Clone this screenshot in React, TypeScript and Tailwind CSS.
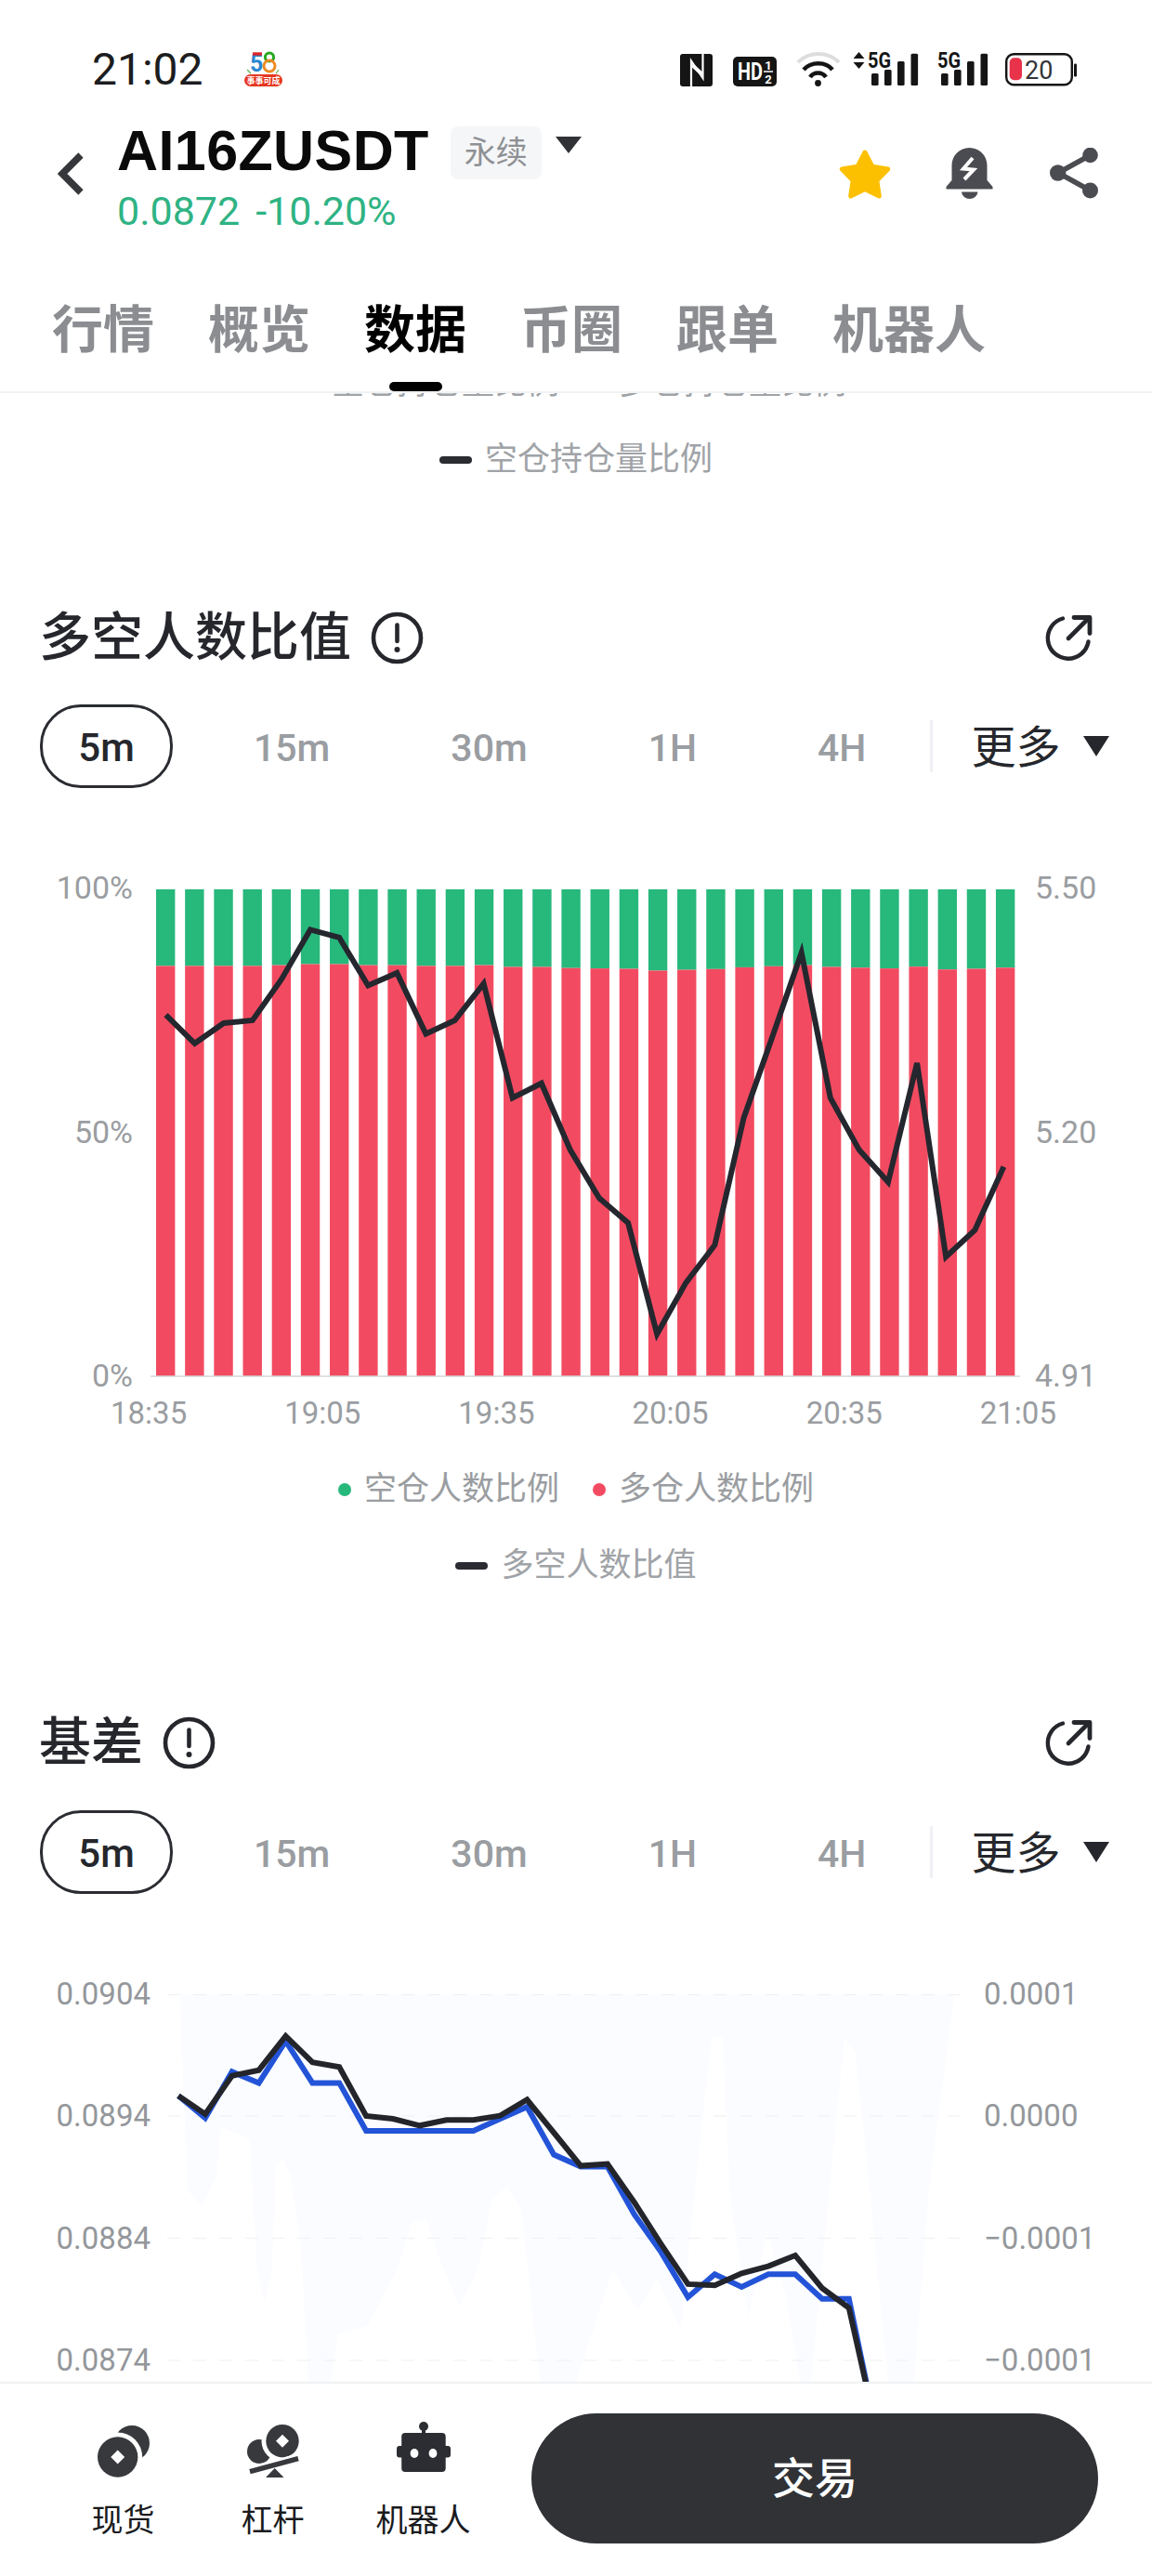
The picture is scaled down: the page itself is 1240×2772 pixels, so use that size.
import React from 'react'

const tabs = ['行情', '概览', '数据', '币圈', '跟单', '机器人']
const ranges = ['15m', '30m', '1H', '4H']

// y of the green/red split per bar, in px from the plot top
const splits = [82.4, 82.4, 82.4, 82.4, 81.6, 80.5, 80.5, 81.6, 81.6, 82.4, 82.4, 81.6, 83.5, 83.5, 84.7, 85.1, 85.5, 87.4, 86.6, 85.8, 83.9, 82.8, 81.6, 83.5, 84.3, 85.1, 83.2, 86.2, 85.5, 84.3]
const ratioLine = [135.2, 165.8, 144, 141, 97, 43.4, 51.8, 103.5, 90, 155.5, 141, 101.5, 224.4, 208.7, 280.6, 332.3, 359, 478.5, 423.4, 382.8, 246.2, 158, 68.2, 224.4, 280.6, 315, 186.9, 395.5, 366.7, 298.6]
const futuresLine = [109.2, 128.9, 87.7, 81.7, 44.9, 73.2, 78.3, 131, 134, 141.3, 135.3, 135.3, 130.6, 113.5, 149, 184.6, 182.5, 224, 269, 311.9, 313.2, 300.3, 292.6, 281, 316.2, 337.6, 466]
const spotLine = [109.2, 133.2, 83.4, 95.4, 50.4, 95.4, 95.4, 146.9, 146.9, 146.9, 146.9, 146.9, 134, 121.2, 172.6, 185.5, 185.5, 236.9, 277.6, 326, 301.2, 314.9, 301.2, 301.2, 327.8, 327.8, 466]
const basisArea = '13.8,0 21.7,211 37.5,228 53.3,194 57.2,142.6 88.9,155.5 96.8,297 104.7,331 112.6,297 116.6,185.5 124.5,177 132.4,194 144.2,271 152,417 175.9,417 183.8,365.5 215.4,357 247,297 262.9,245.5 278.7,241 294.5,288 314.3,335.5 334,297 349.9,219.8 365.7,207 381.5,232.6 401.3,417 440,417 479.5,297 507,340 527,305.5 552.7,361 574.4,147 586.3,46 598,46 606,220 625.8,348 645.6,254 665.4,322.6 681.2,417 693,417 716.8,168 728.7,48 740.5,61 756.3,211 776,417 803.8,417 819.6,211 847,0'

const toPoints = (ys: number[], x0: number, step: number) =>
  ys.map((y, i) => `${(x0 + step * i).toFixed(1)},${y}`).join(' ')

function LogoIcon() {
  return (
    <svg width="41" height="38" viewBox="0 0 41 38" className="ml-[44px] overflow-visible">
      <text x="6" y="22" fontSize="25" fontWeight="700" fontFamily="Roboto" fill="#2a86d0">5</text>
      <path d="M9 3h10" stroke="#d9262c" strokeWidth="3.4" />
      <circle cx="27" cy="6.5" r="4.6" fill="none" stroke="#26a81f" strokeWidth="3" />
      <circle cx="27" cy="16" r="6" fill="none" stroke="#ef8a22" strokeWidth="3" />
      <path d="M3 20l4 4M37 20l-3 4" stroke="#5bb04a" strokeWidth="1.2" />
      <rect x="0" y="25" width="41" height="13" rx="6.5" fill="#e5361f" />
      <text x="20.5" y="35" textAnchor="middle" fontSize="9" fontWeight="700" fill="#fff">事事可成</text>
    </svg>
  )
}

function NfcIcon() {
  return (
    <svg width="35" height="35" viewBox="0 0 35 35">
      <rect width="35" height="35" rx="3" fill="#151515" />
      <path d="M12 35V7.5L24.5 26V0" fill="none" stroke="#fff" strokeWidth="2.2" />
      <path d="M13 12l11 10" stroke="#fff" strokeWidth="4" />
    </svg>
  )
}

function HdIcon() {
  return (
    <svg width="47" height="32" viewBox="0 0 47 32" className="ml-[22px] overflow-visible">
      <rect width="47" height="32" rx="5" fill="#151515" />
      <text x="5" y="25" fontSize="25" fontWeight="700" fontFamily="Roboto" fill="#fff" textLength="27" lengthAdjust="spacingAndGlyphs">HD</text>
      <text x="38" y="14" textAnchor="middle" fontSize="13" fontWeight="700" fontFamily="Roboto" fill="#fff">1</text>
      <path d="M33 16h10" stroke="#fff" strokeWidth="1.5" />
      <text x="38" y="29" textAnchor="middle" fontSize="13" fontWeight="700" fontFamily="Roboto" fill="#fff">2</text>
    </svg>
  )
}

function WifiIcon() {
  return (
    <svg width="48" height="38" viewBox="0 0 48 38" className="ml-[21px]">
      <path d="M2 12C14 0 34 0 46 12" fill="none" stroke="#dddddd" strokeWidth="4" />
      <path d="M8 20C16 11 32 11 39 20" fill="none" stroke="#151515" strokeWidth="4.5" />
      <path d="M15 28C19 22 28 22 32 28" fill="none" stroke="#151515" strokeWidth="4.5" />
      <circle cx="23.5" cy="34.5" r="3.4" fill="#151515" />
    </svg>
  )
}

function SignalIcon({ arrows }: { arrows?: boolean }) {
  const dx = arrows ? 16 : 0
  const bars = [[4, 24], [18, 20], [32, 11], [46.5, 2.7]]
  return (
    <svg width={arrows ? 71 : 54} height="38" viewBox={`0 0 ${arrows ? 71 : 54} 38`} className={`overflow-visible ${arrows ? 'ml-[13px]' : 'ml-[20px]'}`}>
      {arrows && <path d="M6.5 1l6 7H.5zM.5 12h12l-6 7z" fill="#151515" />}
      <text x={dx} y="17.5" fontSize="23" fontWeight="700" fontFamily="Roboto" fill="#151515" textLength="25" lengthAdjust="spacingAndGlyphs">5G</text>
      {bars.map(([x, y]) => (
        <rect key={x} x={x + dx} y={y} width="7.6" height={37 - y} rx="1.5" fill="#151515" />
      ))}
    </svg>
  )
}

function BatteryIcon() {
  return (
    <svg width="78" height="36" viewBox="0 0 78 36" className="ml-[19px]">
      <rect x="1.2" y="1.2" width="70.6" height="33" rx="8" fill="none" stroke="#151515" strokeWidth="2.4" />
      <rect x="4.7" y="5.3" width="13.3" height="24" rx="5" fill="#e8334a" />
      <rect x="74" y="11.5" width="3" height="14" rx="1.2" fill="#151515" />
      <text x="21" y="28" fontSize="27" fontFamily="Roboto" fill="#333539">20</text>
    </svg>
  )
}

function StarIcon() {
  return (
    <svg width="58" height="55" viewBox="0 0 58 55">
      <polygon
        points="29,5 36.9,20.1 53.7,23 41.8,35.2 44.3,52 29,44.5 13.7,52 16.2,35.2 4.3,23 21.1,20.1"
        fill="#fdc000"
        stroke="#fdc000"
        strokeWidth="5"
        strokeLinejoin="round"
      />
    </svg>
  )
}

function BellIcon() {
  return (
    <svg width="51" height="55" viewBox="0 0 51 55" className="ml-[58px]">
      <path d="M25.5 0C36 0 44.5 8.5 44.5 19V35L50.5 42V44.5H.5V42L6.5 35V19C6.5 8.5 15 0 25.5 0Z" fill="#4a4c51" />
      <path d="M17 47.5H34.5C34 52 30 55 25.7 55S17.5 52 17 47.5Z" fill="#4a4c51" />
      <path d="M29 11L19 22.5L30 23.5L20 34" fill="none" stroke="#fff" strokeWidth="4" />
    </svg>
  )
}

function ShareIcon() {
  return (
    <svg width="52" height="55" viewBox="0 0 52 55" className="ml-[61px]">
      <path d="M43.5 8L9 27L43.5 46" fill="none" stroke="#4a4c51" strokeWidth="5.5" />
      <circle cx="43.5" cy="8" r="8.3" fill="#4a4c51" />
      <circle cx="8.7" cy="27" r="8.7" fill="#4a4c51" />
      <circle cx="43.5" cy="46" r="8.5" fill="#4a4c51" />
    </svg>
  )
}

function InfoIcon() {
  return (
    <svg width="57" height="57" viewBox="0 0 57 57">
      <circle cx="28.5" cy="28.5" r="25.5" fill="none" stroke="#25272c" strokeWidth="4.6" />
      <path d="M28.5 14.5V32" stroke="#25272c" strokeWidth="4.6" strokeLinecap="round" />
      <circle cx="28.5" cy="41" r="3" fill="#25272c" />
    </svg>
  )
}

function ExportIcon() {
  return (
    <svg width="52" height="52" viewBox="0 0 52 52" className="ml-auto mr-[64px]">
      <path d="M20 5.5A22 22 0 1 0 47.5 30.5" fill="none" stroke="#25272c" strokeWidth="4.4" strokeLinecap="round" />
      <path d="M26 27L48 5" fill="none" stroke="#25272c" strokeWidth="4.6" strokeLinecap="round" />
      <path d="M32 4.5H49V21.5" fill="none" stroke="#25272c" strokeWidth="4.8" strokeLinecap="round" strokeLinejoin="round" />
    </svg>
  )
}

function SpotIcon() {
  return (
    <svg width="56" height="56" viewBox="0 0 56 56">
      <circle cx="37" cy="19" r="19" fill="#37393d" />
      <circle cx="21.7" cy="34" r="26.5" fill="#fff" />
      <circle cx="21.7" cy="34" r="21.7" fill="#37393d" />
      <path d="M21.7 26.5L29.2 34L21.7 41.5L14.2 34Z" fill="#fff" />
    </svg>
  )
}

function LeverIcon() {
  return (
    <svg width="56" height="57" viewBox="0 0 56 57">
      <circle cx="13" cy="29" r="13" fill="#37393d" />
      <circle cx="38" cy="17.7" r="22.5" fill="#fff" />
      <circle cx="38" cy="17.7" r="17.7" fill="#37393d" />
      <path d="M38 10.7L45 17.7L38 24.7L31 17.7Z" fill="#fff" />
      <path d="M3 50.7L55 36.7" stroke="#fff" strokeWidth="11" />
      <path d="M3 50.7L55 36.7" stroke="#37393d" strokeWidth="5.5" />
      <path d="M20 57H39.5L29.7 47Z" fill="#37393d" />
    </svg>
  )
}

function RobotIcon() {
  return (
    <svg width="58" height="54" viewBox="0 0 58 54" className="mb-[6px]">
      <circle cx="29" cy="5" r="5" fill="#2b2d33" />
      <rect x="27" y="6" width="4" height="8" fill="#2b2d33" />
      <rect x="0" y="26" width="58" height="12.5" rx="3" fill="#2b2d33" />
      <rect x="5.2" y="12" width="47.5" height="42" rx="4" fill="#2b2d33" />
      <ellipse cx="19" cy="34" rx="4.4" ry="5" fill="#fff" />
      <ellipse cx="39" cy="34" rx="4.4" ry="5" fill="#fff" />
    </svg>
  )
}

function LegendItem({ color, label }: { color: string; label: string }) {
  return (
    <div className="flex items-center gap-[14px]">
      <span className="w-[14px] h-[14px] rounded-full" style={{ backgroundColor: color }} />
      <span>{label}</span>
    </div>
  )
}

function LineLegend({ label }: { label: string }) {
  return (
    <div className="mt-[42px] h-[40px] flex justify-center items-center gap-[14px] text-[35px] leading-[40px] text-[#a0a3a7]">
      <span className="w-[35px] h-[8px] rounded-full bg-[#2a2c32]" />
      <span>{label}</span>
    </div>
  )
}

function SectionHeader({ title, className }: { title: string; className: string }) {
  return (
    <div className={`flex items-center h-[60px] pl-[42px] ${className}`}>
      <h2 className="text-[56px] leading-[60px] font-medium text-[#25272c]">{title}</h2>
      <div className="ml-[21px]">
        <InfoIcon />
      </div>
      <ExportIcon />
    </div>
  )
}

function RangeTabs({ className }: { className: string }) {
  return (
    <div className={`flex items-center h-[90px] pl-[43px] ${className}`}>
      <div className="w-[143px] h-[90px] rounded-[44px] border-[3.5px] border-[#2a2c32] flex items-center justify-center text-[42px] font-medium text-[#25272c] pt-[3px]">
        5m
      </div>
      <div className="ml-[87px] pt-[5px] flex gap-[130px] text-[41px] font-medium text-[#9a9da1]">
        {ranges.map(r => (
          <span key={r}>{r}</span>
        ))}
      </div>
      <span className="ml-[69px] w-[3px] h-[56px] bg-[#eef0f4]" />
      <span className="ml-[41px] pt-[3px] text-[48px] leading-[56px] text-[#25272c]">更多</span>
      <svg width="28" height="22" viewBox="0 0 28 22" className="ml-[25px]">
        <path d="M0 0H28L14 22Z" fill="#25272c" />
      </svg>
    </div>
  )
}

function RatioChart() {
  return (
    <>
      <div className="mt-[109px] flex h-[525px] text-[34px] leading-[40px] text-[#9a9da1]">
        <div className="w-[143px] -mt-[22px] -mb-[18px] flex flex-col justify-between text-right">
          <span>100%</span>
          <span>50%</span>
          <span>0%</span>
        </div>
        <svg width="936" height="525" viewBox="0 0 936 525" className="ml-[19px]">
          {splits.map((y, i) => {
            const x = 6 + i * 31.17
            return (
              <g key={i}>
                <rect x={x} y="0" width="20.4" height={y} fill="#27b87c" />
                <rect x={x} y={y} width="20.4" height={524 - y} fill="#f24b61" />
              </g>
            )
          })}
          <path d="M0 524H936" stroke="#d5d7da" strokeWidth="1.5" />
          <polyline points={toPoints(ratioLine, 16.5, 31.1)} fill="none" stroke="#25272f" strokeWidth="6" strokeLinejoin="miter" />
        </svg>
        <div className="ml-[16px] -mt-[22px] -mb-[18px] flex flex-col justify-between">
          <span>5.50</span>
          <span>5.20</span>
          <span>4.91</span>
        </div>
      </div>
      <div className="mt-[19px] ml-[119px] w-[1018px] flex justify-between text-[33px] leading-[40px] text-[#9a9da1]">
        {['18:35', '19:05', '19:35', '20:05', '20:35', '21:05'].map(t => (
          <span key={t}>{t}</span>
        ))}
      </div>
    </>
  )
}

function BasisChart() {
  return (
    <div className="mt-[108px] flex items-start h-[417px] text-[33px] leading-[40px] text-[#94979b]">
      <div className="w-[162px] h-[434px] -mt-[20px] flex flex-col justify-between text-right">
        <span>0.0904</span>
        <span>0.0894</span>
        <span>0.0884</span>
        <span>0.0874</span>
      </div>
      <svg width="863" height="417" viewBox="0 0 863 417" className="ml-[18px]">
        <polygon points={basisArea} fill="#fafcff" />
        {[0.5, 131, 262.5, 394].map(y => (
          <path key={y} d={`M0 ${y}H863`} stroke="#eff0f2" strokeWidth="1.2" strokeDasharray="14 14" />
        ))}
        <polyline points={toPoints(spotLine, 12, 28.87)} fill="none" stroke="#2354d8" strokeWidth="6" />
        <polyline points={toPoints(futuresLine, 12, 28.87)} fill="none" stroke="#23252b" strokeWidth="6" />
      </svg>
      <div className="ml-[16px] h-[434px] -mt-[20px] flex flex-col justify-between">
        <span>0.0001</span>
        <span>0.0000</span>
        <span>−0.0001</span>
        <span>−0.0001</span>
      </div>
    </div>
  )
}

function BottomItem({ label, center, children }: { label: string; center: string; children: React.ReactNode }) {
  return (
    <div className={`flex flex-col items-center ${center}`}>
      <div className="h-[60px] flex items-end">{children}</div>
      <span className="mt-[26px] text-[34px] leading-[40px] text-[#1a1b1e]">{label}</span>
    </div>
  )
}

export default function App() {
  return (
    <div className="w-[1240px] h-[2772px] flex flex-col overflow-hidden bg-white font-['Roboto','Noto_Sans_CJK_SC',sans-serif]">
      <header className="shrink-0 border-b-2 border-[#f1f2f3]">
        <div className="flex items-end h-[92px] mt-[1px] pl-[99px] pt-[20px]">
          <span className="text-[48px] leading-[54px] text-[#1c1d20] -mb-[9px]">21:02</span>
          <LogoIcon />
          <div className="ml-auto mr-[80px] flex items-end">
            <NfcIcon />
            <HdIcon />
            <WifiIcon />
            <SignalIcon arrows />
            <SignalIcon />
            <BatteryIcon />
          </div>
        </div>
        <div className="flex items-start h-[158px] pt-[39px]">
          <svg width="28" height="46" viewBox="0 0 28 46" className="ml-[62px] mt-[32px]">
            <path d="M25 3L5 23L25 43" fill="none" stroke="#36373b" strokeWidth="7.5" />
          </svg>
          <div className="ml-[36px]">
            <div className="flex items-center h-[60px]">
              <span className="font-['Liberation_Sans'] font-bold text-[61px] leading-[60px] tracking-[0.4px] text-[#0a0a0a]">AI16ZUSDT</span>
              <span className="ml-[23px] mt-[4px] w-[98px] h-[57px] rounded-[8px] bg-[#f5f6f7] flex items-center justify-center text-[34px] text-[#8e9094]">永续</span>
              <svg width="28" height="18" viewBox="0 0 28 18" className="ml-[15px] -mt-[13px]">
                <path d="M0 0H28L14 18Z" fill="#303236" />
              </svg>
            </div>
            <div className="mt-[12px] flex gap-[17px] text-[43px] leading-[46px] text-[#2fb384]">
              <span>0.0872</span>
              <span>-10.20%</span>
            </div>
          </div>
          <div className="ml-auto mr-[58px] mt-[27px] flex items-start">
            <StarIcon />
            <BellIcon />
            <ShareIcon />
          </div>
        </div>
        <nav className="flex gap-[58px] pl-[56px] pt-[3px] mt-[71px] h-[99px]">
          {tabs.map(tab => {
            const active = tab === '数据'
            return (
              <div key={tab} className="flex flex-col items-center">
                <span className={`text-[55px] leading-[60px] font-bold ${active ? 'text-black' : 'text-[#8b8d91]'}`}>{tab}</span>
                {active && <span className="mt-[26px] w-[57px] h-[10px] rounded-full bg-black" />}
              </div>
            )
          })}
        </nav>
      </header>

      <main className="flex-1 min-h-0 overflow-hidden">
        <div className="-mt-[30px] h-[40px] flex justify-center items-center gap-[36px] text-[35px] leading-[40px] text-[#a0a3a7]">
          <LegendItem color="#27b87c" label="空仓持仓量比例" />
          <LegendItem color="#f24b61" label="多仓持仓量比例" />
        </div>
        <LineLegend label="空仓持仓量比例" />

        <SectionHeader title="多空人数比值" className="mt-[141px]" />
        <RangeTabs className="mt-[42px]" />
        <RatioChart />
        <div className="mt-[42px] h-[40px] flex justify-center items-center gap-[36px] text-[35px] leading-[40px] text-[#9a9da1]">
          <LegendItem color="#27b87c" label="空仓人数比例" />
          <LegendItem color="#f24b61" label="多仓人数比例" />
        </div>
        <LineLegend label="多空人数比值" />

        <SectionHeader title="基差" className="mt-[140px]" />
        <RangeTabs className="mt-[43px]" />
        <BasisChart />
      </main>

      <footer className="shrink-0 h-[209px] border-t-2 border-[#f0f1f3] bg-white flex items-start">
        <div className="mt-[41px] ml-[89px] flex">
          <BottomItem label="现货" center="w-[87px]">
            <SpotIcon />
          </BottomItem>
          <BottomItem label="杠杆" center="ml-[74px] w-[87px]">
            <LeverIcon />
          </BottomItem>
          <BottomItem label="机器人" center="ml-[61px] w-[115px]">
            <RobotIcon />
          </BottomItem>
        </div>
        <button className="mt-[32px] ml-[59px] w-[610px] h-[140px] rounded-full bg-[#303236] text-white text-[46px] font-medium">交易</button>
      </footer>
    </div>
  )
}
